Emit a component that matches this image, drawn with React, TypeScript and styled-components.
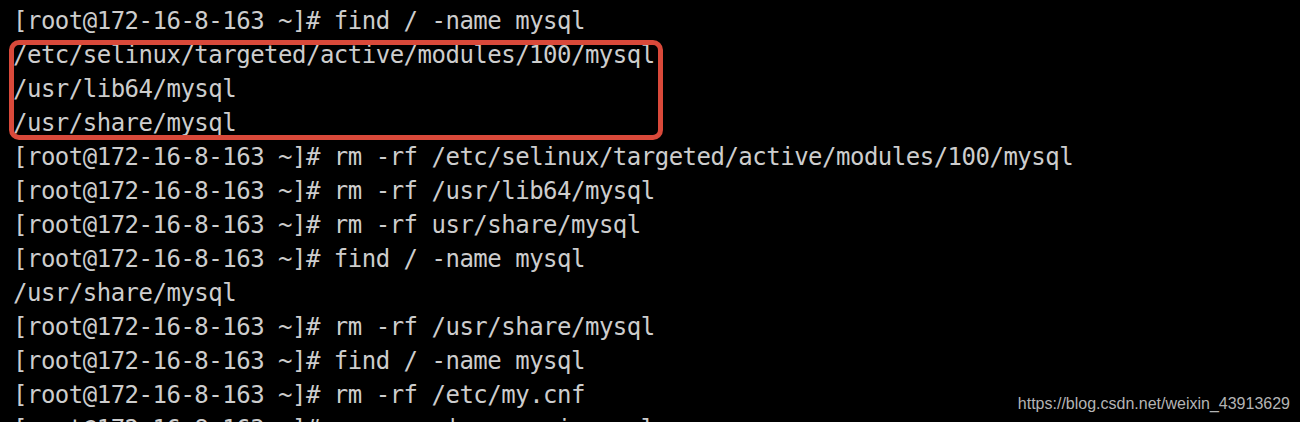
import React from "react";
import styled, { createGlobalStyle } from "styled-components";

const Global = createGlobalStyle`
  html, body { margin: 0; padding: 0; background: #000; }
  body { width: 1300px; height: 422px; overflow: hidden; }
`;

const Screen = styled.div`
  position: relative;
  width: 1300px;
  height: 422px;
  overflow: hidden;
  background: #000;
  padding: 4px 0 0 13px;
  box-sizing: border-box;
`;

const Line = styled.div`
  font-family: "DejaVu Sans Mono", "Liberation Mono", monospace;
  font-size: 24px;
  letter-spacing: -0.5px;
  line-height: 34px;
  height: 34px;
  color: #cdcdcd;
  white-space: pre;
`;

const Highlight = styled.div`
  position: relative;
  &::after {
    content: "";
    position: absolute;
    top: 2px;
    bottom: 0;
    left: -4px;
    width: 654px;
    border: 5px solid #d9493a;
    border-radius: 10px;
    box-sizing: border-box;
    pointer-events: none;
  }
`;

const Watermark = styled.div`
  position: absolute;
  right: 10px;
  bottom: 9px;
  font-family: "Liberation Sans", Arial, sans-serif;
  font-size: 16px;
  color: #b4b4b4;
`;

const P = "[root@172-16-8-163 ~]# ";

export default function App() {
  return (
    <>
      <Global />
      <Screen>
        <Line>{P}find / -name mysql</Line>
        <Highlight>
          <Line>/etc/selinux/targeted/active/modules/100/mysql</Line>
          <Line>/usr/lib64/mysql</Line>
          <Line>/usr/share/mysql</Line>
        </Highlight>
        <Line>{P}rm -rf /etc/selinux/targeted/active/modules/100/mysql</Line>
        <Line>{P}rm -rf /usr/lib64/mysql</Line>
        <Line>{P}rm -rf usr/share/mysql</Line>
        <Line>{P}find / -name mysql</Line>
        <Line>/usr/share/mysql</Line>
        <Line>{P}rm -rf /usr/share/mysql</Line>
        <Line>{P}find / -name mysql</Line>
        <Line>{P}rm -rf /etc/my.cnf</Line>
        <Line>{P}rpm -qa | grep -i mysql</Line>
        <Watermark>https://blog.csdn.net/weixin_43913629</Watermark>
      </Screen>
    </>
  );
}
